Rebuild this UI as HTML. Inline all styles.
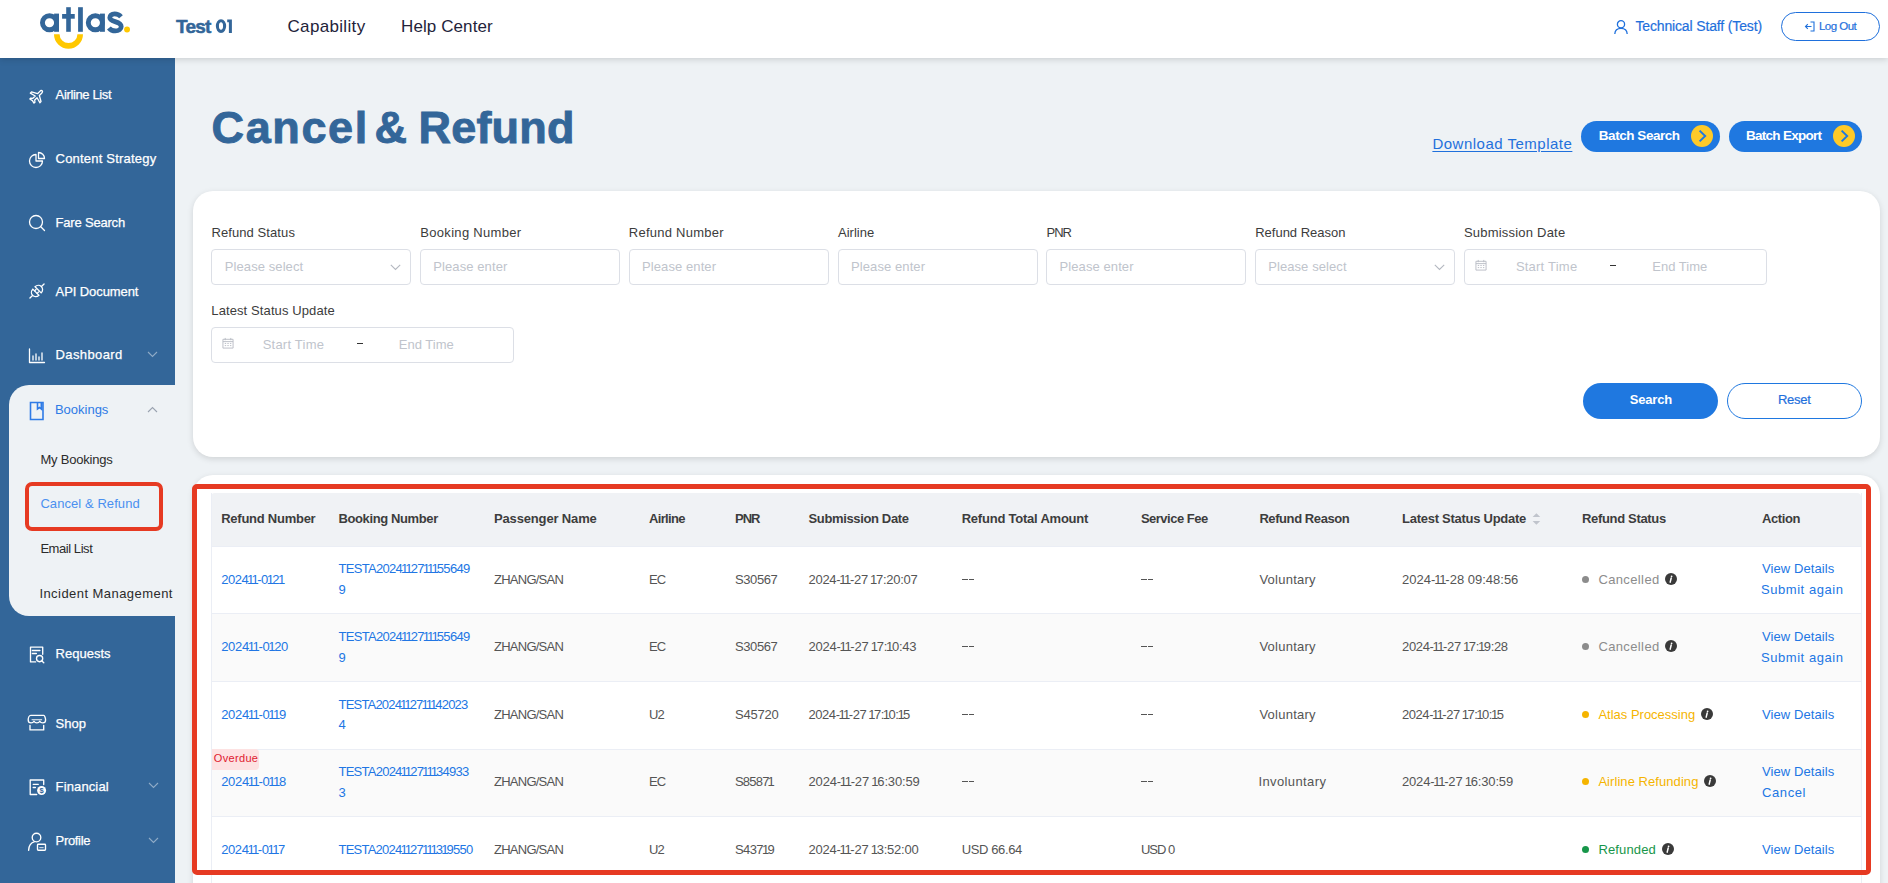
<!DOCTYPE html>
<html><head><meta charset="utf-8"><title>Cancel &amp; Refund</title>
<style>
html,body{margin:0;padding:0}
body{width:1888px;height:883px;overflow:hidden;position:relative;background:#eef2f5;font-family:"Liberation Sans", sans-serif}
.abs{position:absolute}
.t{position:absolute;white-space:nowrap;line-height:1;font-family:"Liberation Sans", sans-serif}
.one{margin:0 -1.1px}
.inp{position:absolute;box-sizing:border-box;border:1px solid #dcdfe6;border-radius:4px;background:#fff}
</style></head><body>
<!-- sidebar -->
<div class="abs" style="left:0;top:0;width:175px;height:883px;background:#336699"></div>
<div class="abs" style="left:9px;top:384.5px;width:166px;height:231.5px;background:#eef2f5;border-radius:20px 0 0 20px"></div>
<div class="abs" style="left:25px;top:482px;width:137.5px;height:49px;box-sizing:border-box;border:4px solid #e63a22;border-radius:7px"></div>

<svg class="abs" style="left:27.5px;top:86.5px" width="18" height="18" viewBox="0 0 24 24"><path transform="rotate(45 12 12)" stroke="#fff" stroke-width="1.75" fill="none" stroke-linejoin="round" d="M12 2.2 C13.1 2.2 13.7 3.3 13.7 4.5 L13.7 9.3 L21 13.4 L21 15.6 L13.7 13.6 L13.7 18 L15.9 19.8 L15.9 21.6 L12 20.6 L8.1 21.6 L8.1 19.8 L10.3 18 L10.3 13.6 L3 15.6 L3 13.4 L10.3 9.3 L10.3 4.5 C10.3 3.3 10.9 2.2 12 2.2 Z"/></svg>
<svg class="abs" style="left:28px;top:151px" width="18" height="18" viewBox="0 0 18 18"><path stroke="#fff" stroke-width="1.3" fill="none" stroke-linecap="round" stroke-linejoin="round" d="M8 3.5 A6.5 6.5 0 1 0 14.5 10 L8 10 Z"/><path stroke="#fff" stroke-width="1.3" fill="none" stroke-linecap="round" stroke-linejoin="round" d="M10.5 1.5 L10.5 7.5 L16.5 7.5 A6 6 0 0 0 10.5 1.5 Z"/></svg>
<svg class="abs" style="left:28px;top:214px" width="18" height="18" viewBox="0 0 18 18"><circle cx="8" cy="8" r="6.5" stroke="#fff" stroke-width="1.3" fill="none" stroke-linecap="round" stroke-linejoin="round"/><path stroke="#fff" stroke-width="1.3" fill="none" stroke-linecap="round" stroke-linejoin="round" d="M12.8 12.8 L16.5 16.5"/></svg>
<svg class="abs" style="left:26px;top:280px" width="22" height="22" viewBox="-11 -11 22 22"><g transform="rotate(-45)" stroke="#fff" stroke-width="1.3" fill="none" stroke-linecap="round"><path d="M-1.6 -4.3 L-1.6 4.3 A4.6 4.3 0 0 1 -1.6 -4.3 Z"/><path d="M1.6 -4.3 L1.6 4.3 A4.6 4.3 0 0 0 1.6 -4.3 Z"/><path d="M-1.6 -1.8 L0.3 -1.8 M-1.6 1.8 L0.3 1.8 M-6.3 0 L-10 0 M6.3 0 L10 0"/></g></svg>
<svg class="abs" style="left:28px;top:348px" width="18" height="16" viewBox="0 0 18 16"><path stroke="#fff" stroke-width="1.3" fill="none" stroke-linecap="round" stroke-linejoin="round" d="M1.5 1 L1.5 14.5 L16.5 14.5 M5 12 L5 8 M8 12 L8 6 M11 12 L11 9 M14 12 L14 5"/></svg>
<svg class="abs" style="left:29px;top:401px" width="16" height="20" viewBox="0 0 16 20"><path stroke="#2f7be6" stroke-width="1.6" fill="none" d="M1.5 1.5 L14 1.5 L14 18.5 L1.5 18.5 Z M8.5 1.5 L8.5 8 L10.5 6.5 L12.3 8 L12.3 1.5"/></svg>
<svg class="abs" style="left:24px;top:640px" width="26" height="28" viewBox="0 0 26 28"><path stroke="#fff" stroke-width="1.35" fill="none" stroke-linecap="round" stroke-linejoin="round" d="M11.6 21.9 L6.5 21.9 L6.5 7.1 L18.7 7.1 L18.7 14.3 M8.4 10.5 L15.9 10.5 M8.4 13.5 L12.4 13.5"/><circle cx="15.6" cy="18.6" r="3.1" stroke="#fff" stroke-width="1.35" fill="none" stroke-linecap="round" stroke-linejoin="round"/><path stroke="#fff" stroke-width="1.35" fill="none" stroke-linecap="round" stroke-linejoin="round" d="M17.9 20.9 L19.8 22.8"/></svg>
<svg class="abs" style="left:24px;top:708px" width="26" height="28" viewBox="0 0 26 28"><path stroke="#fff" stroke-width="1.35" fill="none" stroke-linecap="round" stroke-linejoin="round" d="M6.8 7.3 L19.7 7.3 C20.6 7.3 21.6 10 21.6 12 C21.6 13.8 20.4 14.9 18.8 14.9 C17.3 14.9 16.2 14 15.8 13.2 C15.3 14.2 14.2 14.9 12.9 14.9 C11.6 14.9 10.5 14.2 10 13.2 C9.6 14 8.5 14.9 7 14.9 C5.4 14.9 4.2 13.8 4.2 12 C4.2 10 5.2 7.3 6.8 7.3 Z M6 17.3 L6 21.9 L19.7 21.9 L19.7 17.3"/><path d="M7.6 11.7 L18.1 11.7" stroke="rgba(255,255,255,.75)" stroke-width="1.3"/></svg>
<svg class="abs" style="left:24px;top:774px" width="26" height="28" viewBox="0 0 26 28"><path stroke="#fff" stroke-width="1.35" fill="none" stroke-linecap="round" stroke-linejoin="round" stroke-width="1.5" d="M12.7 20.5 L6.2 20.5 L6.2 6 L19.7 6 L19.7 10.5 M9.2 10.3 L14.3 10.3 M9.2 13.5 L11.4 13.5"/><circle cx="17.6" cy="16.5" r="4.5" fill="#fff"/><text x="17.6" y="19.2" font-size="7.5" font-family="Liberation Sans" font-weight="700" text-anchor="middle" fill="#336699">$</text></svg>
<svg class="abs" style="left:24px;top:828px" width="26" height="28" viewBox="0 0 26 28"><circle cx="12.5" cy="9.5" r="4.3" stroke="#fff" stroke-width="1.35" fill="none" stroke-linecap="round" stroke-linejoin="round"/><path stroke="#fff" stroke-width="1.35" fill="none" stroke-linecap="round" stroke-linejoin="round" d="M10.6 13.7 C7.2 14.6 4.8 18 4.6 22.4"/><rect x="13.5" y="16.2" width="8" height="6" rx="0.8" stroke="#fff" stroke-width="1.35" fill="none" stroke-linecap="round" stroke-linejoin="round"/><path d="M15.3 19.6 L19.6 19.6" stroke="rgba(255,255,255,.7)" stroke-width="1.2"/></svg>
<svg class="abs" style="left:147px;top:351px" width="11" height="7" viewBox="0 0 11 7"><path d="M1 1 L5.5 5.5 L10 1" stroke="rgba(255,255,255,.45)" stroke-width="1.1" fill="none"/></svg>
<svg class="abs" style="left:147px;top:406px" width="11" height="7" viewBox="0 0 11 7"><path d="M1 6 L5.5 1.5 L10 6" stroke="#9aa3b0" stroke-width="1.1" fill="none"/></svg>
<svg class="abs" style="left:148px;top:782px" width="11" height="7" viewBox="0 0 11 7"><path d="M1 1 L5.5 5.5 L10 1" stroke="rgba(255,255,255,.45)" stroke-width="1.1" fill="none"/></svg>
<svg class="abs" style="left:148px;top:837px" width="11" height="7" viewBox="0 0 11 7"><path d="M1 1 L5.5 5.5 L10 1" stroke="rgba(255,255,255,.45)" stroke-width="1.1" fill="none"/></svg>

<!-- header -->
<div class="abs" style="left:0;top:0;width:1888px;height:58px;background:#fff;box-shadow:0 1px 7px rgba(0,0,0,.17)"></div>
<svg class="abs" style="left:0;top:0" width="140" height="58" viewBox="0 0 140 58">
 <g fill="none" stroke="#336699" stroke-width="4.9"><circle cx="49.5" cy="22.75" r="7.05"/><circle cx="95.35" cy="22.75" r="7.05"/></g>
 <g fill="#336699"><rect x="54.1" y="13.6" width="4.9" height="18.2"/><rect x="100" y="13.6" width="4.9" height="18.2"/>
 <rect x="66.2" y="7.2" width="4.6" height="24.6"/><rect x="62.1" y="14" width="12.65" height="4.7"/><rect x="78.1" y="7.2" width="4.75" height="24.6"/></g>
 <path d="M121 16.8 C119.2 14.7 116.8 13.9 114.6 13.9 C111.4 13.9 109.8 15.8 109.8 17.8 C109.8 22.3 121.2 20.9 121.2 26.4 C121.2 29.2 118.8 30.9 115.4 30.9 C112.6 30.9 110.4 29.8 108.9 27.9" fill="none" stroke="#336699" stroke-width="4.8"/>
 <circle cx="127.05" cy="29.55" r="2.95" fill="#ffc800"/>
 <path d="M56.8 34.2 A11.7 11.7 0 0 0 80.2 34.2" fill="none" stroke="#ffc800" stroke-width="5.6"/>
</svg>
<svg class="abs" style="left:1613px;top:19px" width="16" height="16" viewBox="0 0 16 16"><circle cx="8" cy="5.3" r="3.6" stroke="#1f70dc" stroke-width="1.3" fill="none"/><path d="M1.8 15 C2 11.2 4.6 9.3 8 9.3 C11.4 9.3 14 11.2 14.2 15" stroke="#1f70dc" stroke-width="1.3" fill="none"/></svg>
<div class="abs" style="left:1781px;top:12px;width:99px;height:29px;box-sizing:border-box;border:1px solid #1f70dc;border-radius:15px"></div>
<svg class="abs" style="left:1804px;top:21px" width="11" height="11" viewBox="0 0 11 11"><path d="M6.5 1 L10 1 L10 10 L6.5 10 M7.5 5.5 L1.5 5.5 M3.8 3.2 L1.5 5.5 L3.8 7.8" stroke="#1f70dc" stroke-width="1.1" fill="none"/></svg>
<svg class="abs" style="left:210px;top:15px" width="30" height="22" viewBox="210 15 30 22"><ellipse cx="221" cy="26.1" rx="3.6" ry="5.3" stroke="#336699" stroke-width="3.1" fill="none"/><path d="M227.2 19.6 L231.9 19.6 L231.9 32.9 L228.9 32.9 L228.9 22.3 L227.2 22.3 Z" fill="#336699"/></svg>
<!-- batch buttons -->
<div class="abs" style="left:1581px;top:121px;width:139px;height:31px;border-radius:16px;background:#1f78e0"></div>
<div class="abs" style="left:1691px;top:125px;width:22px;height:22px;border-radius:50%;background:#ffca28"></div>
<svg class="abs" style="left:1691px;top:125px" width="22" height="22" viewBox="0 0 22 22"><path d="M8.6 5.6 L14.2 11 L8.6 16.4" stroke="#1f78e0" stroke-width="1.9" fill="none"/></svg>
<div class="abs" style="left:1729px;top:121px;width:132.5px;height:31px;border-radius:16px;background:#1f78e0"></div>
<div class="abs" style="left:1833px;top:125px;width:22px;height:22px;border-radius:50%;background:#ffca28"></div>
<svg class="abs" style="left:1833px;top:125px" width="22" height="22" viewBox="0 0 22 22"><path d="M8.6 5.6 L14.2 11 L8.6 16.4" stroke="#1f78e0" stroke-width="1.9" fill="none"/></svg>
<!-- filter card -->
<div class="abs" style="left:193px;top:191px;width:1687px;height:266px;background:#fff;border-radius:20px;box-shadow:0 2px 6px rgba(0,0,0,.13)"></div>
<div class="inp" style="left:211px;top:249px;width:200px;height:36px"></div>
<div class="inp" style="left:420px;top:249px;width:200px;height:36px"></div>
<div class="inp" style="left:629px;top:249px;width:200px;height:36px"></div>
<div class="inp" style="left:838px;top:249px;width:200px;height:36px"></div>
<div class="inp" style="left:1046px;top:249px;width:200px;height:36px"></div>
<div class="inp" style="left:1255px;top:249px;width:199.5px;height:36px"></div>
<svg class="abs" style="left:390px;top:264px" width="11" height="7" viewBox="0 0 11 7"><path d="M0.8 0.8 L5.5 5.5 L10.2 0.8" stroke="#b4b8c0" stroke-width="1.1" fill="none"/></svg>
<svg class="abs" style="left:1434px;top:264px" width="11" height="7" viewBox="0 0 11 7"><path d="M0.8 0.8 L5.5 5.5 L10.2 0.8" stroke="#b4b8c0" stroke-width="1.1" fill="none"/></svg>
<div class="inp" style="left:1464px;top:249px;width:303px;height:36px"></div>
<div class="inp" style="left:211px;top:327px;width:303px;height:36px"></div>
<svg class="abs" style="left:1474.8px;top:259px" width="12" height="12" viewBox="0 0 13 13"><path d="M1 2.5 L12 2.5 L12 12 L1 12 Z M1 5 L12 5 M3.5 1 L3.5 3.5 M9.5 1 L9.5 3.5" stroke="#b8bcc4" stroke-width="1" fill="none"/><path d="M3 7 h1.5 M5.8 7 h1.5 M8.6 7 h1.5 M3 9.3 h1.5 M5.8 9.3 h1.5 M8.6 9.3 h1.5" stroke="#b8bcc4" stroke-width="1"/></svg>
<svg class="abs" style="left:221.8px;top:337px" width="12" height="12" viewBox="0 0 13 13"><path d="M1 2.5 L12 2.5 L12 12 L1 12 Z M1 5 L12 5 M3.5 1 L3.5 3.5 M9.5 1 L9.5 3.5" stroke="#b8bcc4" stroke-width="1" fill="none"/><path d="M3 7 h1.5 M5.8 7 h1.5 M8.6 7 h1.5 M3 9.3 h1.5 M5.8 9.3 h1.5 M8.6 9.3 h1.5" stroke="#b8bcc4" stroke-width="1"/></svg>
<div class="abs" style="left:1610px;top:265px;width:6px;height:1.3px;background:#333"></div>
<div class="abs" style="left:357px;top:343px;width:6px;height:1.3px;background:#333"></div>
<div class="abs" style="left:1583px;top:383px;width:135px;height:36px;border-radius:18px;background:#1f78e0"></div>
<div class="abs" style="left:1727px;top:383px;width:135px;height:36px;border-radius:18px;box-sizing:border-box;border:1px solid #1f78e0;background:#fff"></div>
<!-- table card -->
<div class="abs" style="left:193px;top:475px;width:1687px;height:430px;background:#fff;border-radius:20px;box-shadow:0 2px 6px rgba(0,0,0,.13)"></div>
<div class="abs" style="left:211px;top:493px;width:1650px;height:54px;background:#f0f2f5;border-radius:4px 4px 0 0"></div>
<div class="abs" style="left:211px;top:546px;width:1650px;height:67.5px;background:#ffffff;border-top:1px solid #ebeef5;box-sizing:border-box"></div>
<div class="abs" style="left:211px;top:613px;width:1650px;height:67.5px;background:#fafafa;border-top:1px solid #ebeef5;box-sizing:border-box"></div>
<div class="abs" style="left:211px;top:681px;width:1650px;height:67.5px;background:#ffffff;border-top:1px solid #ebeef5;box-sizing:border-box"></div>
<div class="abs" style="left:211px;top:748.5px;width:1650px;height:67.5px;background:#fafafa;border-top:1px solid #ebeef5;box-sizing:border-box"></div>
<div class="abs" style="left:211px;top:816px;width:1650px;height:67.5px;background:#ffffff;border-top:1px solid #ebeef5;box-sizing:border-box"></div>
<div class="abs" style="left:211px;top:493px;width:1px;height:400px;background:#ebeef5"></div>
<div class="abs" style="left:1861px;top:493px;width:1px;height:400px;background:#ebeef5"></div>
<svg class="abs" style="left:1531.5px;top:512px" width="9" height="14" viewBox="0 0 9 14"><path d="M0.6 5 L4.4 1.2 L8.2 5 Z M0.6 9 L4.4 12.8 L8.2 9 Z" fill="#c0c4cc"/></svg>
<div class="abs" style="left:211.5px;top:749px;width:47.5px;height:20.5px;background:#fde2e2;border-radius:0 4px 4px 0"></div>
<div class="abs" style="left:1582px;top:576.4px;width:7px;height:7px;border-radius:50%;background:#8c8c8c"></div>
<svg class="abs" style="left:1665px;top:573.0px" width="12" height="12" viewBox="0 0 12 12"><circle cx="6" cy="6" r="6" fill="#3a3a3a"/><circle cx="6.6" cy="3.3" r="0.9" fill="#fff"/><path d="M6.2 5 L5.2 9.2" stroke="#fff" stroke-width="1.5" stroke-linecap="round"/></svg>
<div class="abs" style="left:1582px;top:643.4px;width:7px;height:7px;border-radius:50%;background:#8c8c8c"></div>
<svg class="abs" style="left:1665px;top:640.0px" width="12" height="12" viewBox="0 0 12 12"><circle cx="6" cy="6" r="6" fill="#3a3a3a"/><circle cx="6.6" cy="3.3" r="0.9" fill="#fff"/><path d="M6.2 5 L5.2 9.2" stroke="#fff" stroke-width="1.5" stroke-linecap="round"/></svg>
<div class="abs" style="left:1582px;top:711.4px;width:7px;height:7px;border-radius:50%;background:#f5b400"></div>
<svg class="abs" style="left:1701.3px;top:708.0px" width="12" height="12" viewBox="0 0 12 12"><circle cx="6" cy="6" r="6" fill="#3a3a3a"/><circle cx="6.6" cy="3.3" r="0.9" fill="#fff"/><path d="M6.2 5 L5.2 9.2" stroke="#fff" stroke-width="1.5" stroke-linecap="round"/></svg>
<div class="abs" style="left:1582px;top:778.4px;width:7px;height:7px;border-radius:50%;background:#f5b400"></div>
<svg class="abs" style="left:1703.9px;top:775.0px" width="12" height="12" viewBox="0 0 12 12"><circle cx="6" cy="6" r="6" fill="#3a3a3a"/><circle cx="6.6" cy="3.3" r="0.9" fill="#fff"/><path d="M6.2 5 L5.2 9.2" stroke="#fff" stroke-width="1.5" stroke-linecap="round"/></svg>
<div class="abs" style="left:1582px;top:846.4px;width:7px;height:7px;border-radius:50%;background:#17964a"></div>
<svg class="abs" style="left:1662.2px;top:843.0px" width="12" height="12" viewBox="0 0 12 12"><circle cx="6" cy="6" r="6" fill="#3a3a3a"/><circle cx="6.6" cy="3.3" r="0.9" fill="#fff"/><path d="M6.2 5 L5.2 9.2" stroke="#fff" stroke-width="1.5" stroke-linecap="round"/></svg>
<div class="abs" style="left:962px;top:579.1px;width:5.6px;height:1.2px;background:#555"></div><div class="abs" style="left:968.6px;top:579.1px;width:5.6px;height:1.2px;background:#555"></div><div class="abs" style="left:1141px;top:579.1px;width:5.6px;height:1.2px;background:#555"></div><div class="abs" style="left:1147.6px;top:579.1px;width:5.6px;height:1.2px;background:#555"></div><div class="abs" style="left:962px;top:646.1px;width:5.6px;height:1.2px;background:#555"></div><div class="abs" style="left:968.6px;top:646.1px;width:5.6px;height:1.2px;background:#555"></div><div class="abs" style="left:1141px;top:646.1px;width:5.6px;height:1.2px;background:#555"></div><div class="abs" style="left:1147.6px;top:646.1px;width:5.6px;height:1.2px;background:#555"></div><div class="abs" style="left:962px;top:714.1px;width:5.6px;height:1.2px;background:#555"></div><div class="abs" style="left:968.6px;top:714.1px;width:5.6px;height:1.2px;background:#555"></div><div class="abs" style="left:1141px;top:714.1px;width:5.6px;height:1.2px;background:#555"></div><div class="abs" style="left:1147.6px;top:714.1px;width:5.6px;height:1.2px;background:#555"></div><div class="abs" style="left:962px;top:781.1px;width:5.6px;height:1.2px;background:#555"></div><div class="abs" style="left:968.6px;top:781.1px;width:5.6px;height:1.2px;background:#555"></div><div class="abs" style="left:1141px;top:781.1px;width:5.6px;height:1.2px;background:#555"></div><div class="abs" style="left:1147.6px;top:781.1px;width:5.6px;height:1.2px;background:#555"></div>
<div class="abs" style="left:192px;top:484px;width:1679px;height:391px;box-sizing:border-box;border:5px solid #e63a22;border-radius:5px"></div>
<span id="h_test1" class="t" style="left:176.00px;top:17.22px;font-size:19px;font-weight:700;color:#336699;letter-spacing:-0.801px;-webkit-text-stroke:0.5px #336699;">Test</span>
<span id="h_cap" class="t" style="left:287.50px;top:18.01px;font-size:17px;font-weight:400;color:#23233a;letter-spacing:0.333px;">Capability</span>
<span id="h_help" class="t" style="left:401.00px;top:18.01px;font-size:17px;font-weight:400;color:#23233a;letter-spacing:0.100px;">Help Center</span>
<span id="h_user" class="t" style="left:1635.40px;top:19.45px;font-size:14px;font-weight:400;color:#1f70dc;letter-spacing:-0.143px;-webkit-text-stroke:0.2px #1f70dc;">Technical Staff (Test)</span>
<span id="h_logout" class="t" style="left:1818.90px;top:20.77px;font-size:11.5px;font-weight:400;color:#1f70dc;letter-spacing:-0.501px;-webkit-text-stroke:0.2px #1f70dc;">Log Out</span>
<span id="title1" class="t" style="left:211.60px;top:104.91px;font-size:45px;font-weight:700;color:#336699;letter-spacing:1.620px;-webkit-text-stroke:0.9px #336699;">Cancel</span>
<span id="title2" class="t" style="left:374.40px;top:104.91px;font-size:45px;font-weight:700;color:#336699;letter-spacing:0.000px;-webkit-text-stroke:0.9px #336699;">&amp;</span>
<span id="title3" class="t" style="left:418.40px;top:104.91px;font-size:45px;font-weight:700;color:#336699;letter-spacing:0.240px;-webkit-text-stroke:0.9px #336699;">Refund</span>
<span id="dl" class="t" style="left:1432.40px;top:136.30px;font-size:15px;font-weight:400;color:#1f70dc;letter-spacing:0.500px;text-decoration:underline;text-underline-offset:2px;">Download Template</span>
<span id="bs" class="t" style="left:1598.80px;top:129.07px;font-size:13.5px;font-weight:700;color:#ffffff;letter-spacing:-0.454px;">Batch Search</span>
<span id="be" class="t" style="left:1746.00px;top:129.07px;font-size:13.5px;font-weight:700;color:#ffffff;letter-spacing:-0.727px;">Batch Export</span>
<span id="s0" class="t" style="left:55.60px;top:87.90px;font-size:13px;font-weight:400;color:#ffffff;letter-spacing:-0.364px;-webkit-text-stroke:0.25px #ffffff;">Airline List</span>
<span id="s1" class="t" style="left:55.60px;top:152.40px;font-size:13px;font-weight:400;color:#ffffff;letter-spacing:0.200px;-webkit-text-stroke:0.25px #ffffff;">Content Strategy</span>
<span id="s2" class="t" style="left:55.60px;top:215.90px;font-size:13px;font-weight:400;color:#ffffff;letter-spacing:-0.200px;-webkit-text-stroke:0.25px #ffffff;">Fare Search</span>
<span id="s3" class="t" style="left:55.60px;top:285.30px;font-size:13px;font-weight:400;color:#ffffff;letter-spacing:-0.091px;-webkit-text-stroke:0.25px #ffffff;">API Document</span>
<span id="s4" class="t" style="left:55.60px;top:348.20px;font-size:13px;font-weight:400;color:#ffffff;letter-spacing:0.376px;-webkit-text-stroke:0.25px #ffffff;">Dashboard</span>
<span id="s5" class="t" style="left:55.60px;top:647.30px;font-size:13px;font-weight:400;color:#ffffff;letter-spacing:0.000px;-webkit-text-stroke:0.25px #ffffff;">Requests</span>
<span id="s6" class="t" style="left:55.60px;top:716.70px;font-size:13px;font-weight:400;color:#ffffff;letter-spacing:-0.000px;-webkit-text-stroke:0.25px #ffffff;">Shop</span>
<span id="s7" class="t" style="left:55.60px;top:780.40px;font-size:13px;font-weight:400;color:#ffffff;letter-spacing:0.125px;-webkit-text-stroke:0.25px #ffffff;">Financial</span>
<span id="s8" class="t" style="left:55.60px;top:834.30px;font-size:13px;font-weight:400;color:#ffffff;letter-spacing:-0.332px;-webkit-text-stroke:0.25px #ffffff;">Profile</span>
<span id="s_book" class="t" style="left:54.90px;top:403.00px;font-size:13px;font-weight:400;color:#2f7be6;letter-spacing:0.000px;">Bookings</span>
<span id="s_my" class="t" style="left:40.40px;top:452.70px;font-size:13px;font-weight:400;color:#2b2b2b;letter-spacing:-0.200px;">My Bookings</span>
<span id="s_cr" class="t" style="left:40.40px;top:497.40px;font-size:13px;font-weight:400;color:#4a90f0;letter-spacing:0.072px;">Cancel &amp; Refund</span>
<span id="s_em" class="t" style="left:40.40px;top:542.20px;font-size:13px;font-weight:400;color:#2b2b2b;letter-spacing:-0.444px;">Email List</span>
<span id="s_inc" class="t" style="left:39.40px;top:587.30px;font-size:13px;font-weight:400;color:#2b2b2b;letter-spacing:0.445px;">Incident Management</span>
<span id="lab0" class="t" style="left:211.50px;top:225.90px;font-size:13px;font-weight:400;color:#3c3c3c;letter-spacing:0.083px;">Refund Status</span>
<span id="lab1" class="t" style="left:420.30px;top:225.90px;font-size:13px;font-weight:400;color:#3c3c3c;letter-spacing:0.308px;">Booking Number</span>
<span id="lab2" class="t" style="left:628.80px;top:225.90px;font-size:13px;font-weight:400;color:#3c3c3c;letter-spacing:0.250px;">Refund Number</span>
<span id="lab3" class="t" style="left:838.00px;top:225.90px;font-size:13px;font-weight:400;color:#3c3c3c;letter-spacing:0.000px;">Airline</span>
<span id="lab4" class="t" style="left:1046.50px;top:225.90px;font-size:13px;font-weight:400;color:#3c3c3c;letter-spacing:-1.000px;">PNR</span>
<span id="lab5" class="t" style="left:1255.20px;top:225.90px;font-size:13px;font-weight:400;color:#3c3c3c;letter-spacing:-0.001px;">Refund Reason</span>
<span id="lab6" class="t" style="left:1463.90px;top:225.90px;font-size:13px;font-weight:400;color:#3c3c3c;letter-spacing:0.212px;">Submission Date</span>
<span id="lab7" class="t" style="left:211.30px;top:303.90px;font-size:13px;font-weight:400;color:#3c3c3c;letter-spacing:0.105px;">Latest Status Update</span>
<span id="ph0" class="t" style="left:224.80px;top:260.00px;font-size:13px;font-weight:400;color:#c0c4cc;letter-spacing:0.083px;">Please select</span>
<span id="ph1" class="t" style="left:433.30px;top:260.00px;font-size:13px;font-weight:400;color:#c0c4cc;letter-spacing:0.091px;">Please enter</span>
<span id="ph2" class="t" style="left:642.00px;top:260.00px;font-size:13px;font-weight:400;color:#c0c4cc;letter-spacing:0.091px;">Please enter</span>
<span id="ph3" class="t" style="left:851.00px;top:260.00px;font-size:13px;font-weight:400;color:#c0c4cc;letter-spacing:0.091px;">Please enter</span>
<span id="ph4" class="t" style="left:1059.50px;top:260.00px;font-size:13px;font-weight:400;color:#c0c4cc;letter-spacing:0.091px;">Please enter</span>
<span id="ph5" class="t" style="left:1268.20px;top:260.00px;font-size:13px;font-weight:400;color:#c0c4cc;letter-spacing:0.083px;">Please select</span>
<span id="ph_st1" class="t" style="left:1515.90px;top:260.00px;font-size:13px;font-weight:400;color:#c0c4cc;letter-spacing:0.222px;">Start Time</span>
<span id="ph_et1" class="t" style="left:1652.30px;top:260.00px;font-size:13px;font-weight:400;color:#c0c4cc;letter-spacing:0.001px;">End Time</span>
<span id="ph_st2" class="t" style="left:262.70px;top:337.60px;font-size:13px;font-weight:400;color:#c0c4cc;letter-spacing:0.222px;">Start Time</span>
<span id="ph_et2" class="t" style="left:398.80px;top:337.60px;font-size:13px;font-weight:400;color:#c0c4cc;letter-spacing:-0.001px;">End Time</span>
<span id="btn_s" class="t" style="left:1629.80px;top:393.20px;font-size:13px;font-weight:700;color:#ffffff;letter-spacing:-0.200px;">Search</span>
<span id="btn_r" class="t" style="left:1777.90px;top:393.20px;font-size:13px;font-weight:400;color:#1f70dc;letter-spacing:-0.250px;-webkit-text-stroke:0.2px #1f70dc;">Reset</span>
<span id="th0" class="t" style="left:221.20px;top:511.60px;font-size:13px;font-weight:700;color:#3d3d3d;letter-spacing:-0.251px;">Refund Number</span>
<span id="th1" class="t" style="left:338.50px;top:511.60px;font-size:13px;font-weight:700;color:#3d3d3d;letter-spacing:-0.385px;">Booking Number</span>
<span id="th2" class="t" style="left:494.00px;top:511.60px;font-size:13px;font-weight:700;color:#3d3d3d;letter-spacing:-0.154px;">Passenger Name</span>
<span id="th3" class="t" style="left:649.00px;top:511.60px;font-size:13px;font-weight:700;color:#3d3d3d;letter-spacing:-0.665px;">Airline</span>
<span id="th4" class="t" style="left:735.00px;top:511.60px;font-size:13px;font-weight:700;color:#3d3d3d;letter-spacing:-1.000px;">PNR</span>
<span id="th5" class="t" style="left:808.50px;top:511.60px;font-size:13px;font-weight:700;color:#3d3d3d;letter-spacing:-0.357px;">Submission Date</span>
<span id="th6" class="t" style="left:961.70px;top:511.60px;font-size:13px;font-weight:700;color:#3d3d3d;letter-spacing:-0.222px;">Refund Total Amount</span>
<span id="th7" class="t" style="left:1140.90px;top:511.60px;font-size:13px;font-weight:700;color:#3d3d3d;letter-spacing:-0.500px;">Service Fee</span>
<span id="th8" class="t" style="left:1259.40px;top:511.60px;font-size:13px;font-weight:700;color:#3d3d3d;letter-spacing:-0.417px;">Refund Reason</span>
<span id="th9" class="t" style="left:1402.00px;top:511.60px;font-size:13px;font-weight:700;color:#3d3d3d;letter-spacing:-0.263px;">Latest Status Update</span>
<span id="th10" class="t" style="left:1582.00px;top:511.60px;font-size:13px;font-weight:700;color:#3d3d3d;letter-spacing:-0.333px;">Refund Status</span>
<span id="th11" class="t" style="left:1762.00px;top:511.60px;font-size:13px;font-weight:700;color:#3d3d3d;letter-spacing:-0.400px;">Action</span>
<span id="r0rn" class="t" style="left:221.20px;top:572.80px;font-size:13px;font-weight:400;color:#2176e4;letter-spacing:-0.500px;">2024<span class="one">1</span><span class="one">1</span>-0<span class="one">1</span>2<span class="one">1</span></span>
<span id="r0bn1" class="t" style="left:338.50px;top:561.80px;font-size:13px;font-weight:400;color:#2176e4;letter-spacing:-0.700px;">TESTA2024<span class="one">1</span><span class="one">1</span>27<span class="one">1</span><span class="one">1</span><span class="one">1</span>55649</span>
<span id="r0bn2" class="t" style="left:338.50px;top:582.80px;font-size:13px;font-weight:400;color:#2176e4;letter-spacing:0.000px;">9</span>
<span id="r0pn" class="t" style="left:494.00px;top:572.80px;font-size:13px;font-weight:400;color:#555555;letter-spacing:-0.750px;">ZHANG/SAN</span>
<span id="r0air" class="t" style="left:649.00px;top:572.80px;font-size:13px;font-weight:400;color:#555555;letter-spacing:-1.000px;">EC</span>
<span id="r0pnr" class="t" style="left:735.00px;top:572.80px;font-size:13px;font-weight:400;color:#555555;letter-spacing:-0.400px;">S30567</span>
<span id="r0sub" class="t" style="left:808.50px;top:572.80px;font-size:13px;font-weight:400;color:#555555;letter-spacing:-0.278px;">2024-<span class="one">1</span><span class="one">1</span>-27 <span class="one">1</span>7:20:07</span>
<span id="r0rea" class="t" style="left:1259.40px;top:572.80px;font-size:13px;font-weight:400;color:#555555;letter-spacing:0.250px;">Voluntary</span>
<span id="r0upd" class="t" style="left:1402.00px;top:572.80px;font-size:13px;font-weight:400;color:#555555;letter-spacing:0.000px;">2024-<span class="one">1</span><span class="one">1</span>-28 09:48:56</span>
<span id="r0st" class="t" style="left:1598.40px;top:572.80px;font-size:13px;font-weight:400;color:#8c8c8c;letter-spacing:0.376px;">Cancelled</span>
<span id="r0a1" class="t" style="left:1762.00px;top:561.80px;font-size:13px;font-weight:400;color:#2176e4;letter-spacing:0.091px;">View Details</span>
<span id="r0a2" class="t" style="left:1761.00px;top:582.80px;font-size:13px;font-weight:400;color:#2176e4;letter-spacing:0.545px;">Submit again</span>
<span id="r1rn" class="t" style="left:221.20px;top:639.80px;font-size:13px;font-weight:400;color:#2176e4;letter-spacing:-0.300px;">2024<span class="one">1</span><span class="one">1</span>-0<span class="one">1</span>20</span>
<span id="r1bn1" class="t" style="left:338.50px;top:629.80px;font-size:13px;font-weight:400;color:#2176e4;letter-spacing:-0.700px;">TESTA2024<span class="one">1</span><span class="one">1</span>27<span class="one">1</span><span class="one">1</span><span class="one">1</span>55649</span>
<span id="r1bn2" class="t" style="left:338.50px;top:650.80px;font-size:13px;font-weight:400;color:#2176e4;letter-spacing:0.000px;">9</span>
<span id="r1pn" class="t" style="left:494.00px;top:639.80px;font-size:13px;font-weight:400;color:#555555;letter-spacing:-0.750px;">ZHANG/SAN</span>
<span id="r1air" class="t" style="left:649.00px;top:639.80px;font-size:13px;font-weight:400;color:#555555;letter-spacing:-1.000px;">EC</span>
<span id="r1pnr" class="t" style="left:735.00px;top:639.80px;font-size:13px;font-weight:400;color:#555555;letter-spacing:-0.400px;">S30567</span>
<span id="r1sub" class="t" style="left:808.50px;top:639.80px;font-size:13px;font-weight:400;color:#555555;letter-spacing:-0.223px;">2024-<span class="one">1</span><span class="one">1</span>-27 <span class="one">1</span>7:<span class="one">1</span>0:43</span>
<span id="r1rea" class="t" style="left:1259.40px;top:639.80px;font-size:13px;font-weight:400;color:#555555;letter-spacing:0.250px;">Voluntary</span>
<span id="r1upd" class="t" style="left:1402.00px;top:639.80px;font-size:13px;font-weight:400;color:#555555;letter-spacing:-0.333px;">2024-<span class="one">1</span><span class="one">1</span>-27 <span class="one">1</span>7:<span class="one">1</span>9:28</span>
<span id="r1st" class="t" style="left:1598.40px;top:639.80px;font-size:13px;font-weight:400;color:#8c8c8c;letter-spacing:0.376px;">Cancelled</span>
<span id="r1a1" class="t" style="left:1762.00px;top:629.80px;font-size:13px;font-weight:400;color:#2176e4;letter-spacing:0.091px;">View Details</span>
<span id="r1a2" class="t" style="left:1761.00px;top:650.80px;font-size:13px;font-weight:400;color:#2176e4;letter-spacing:0.545px;">Submit again</span>
<span id="r2rn" class="t" style="left:221.20px;top:707.80px;font-size:13px;font-weight:400;color:#2176e4;letter-spacing:-0.300px;">2024<span class="one">1</span><span class="one">1</span>-0<span class="one">1</span><span class="one">1</span>9</span>
<span id="r2bn1" class="t" style="left:338.50px;top:697.80px;font-size:13px;font-weight:400;color:#2176e4;letter-spacing:-0.800px;">TESTA2024<span class="one">1</span><span class="one">1</span>27<span class="one">1</span><span class="one">1</span><span class="one">1</span>42023</span>
<span id="r2bn2" class="t" style="left:338.50px;top:717.80px;font-size:13px;font-weight:400;color:#2176e4;letter-spacing:0.000px;">4</span>
<span id="r2pn" class="t" style="left:494.00px;top:707.80px;font-size:13px;font-weight:400;color:#555555;letter-spacing:-0.750px;">ZHANG/SAN</span>
<span id="r2air" class="t" style="left:649.00px;top:707.80px;font-size:13px;font-weight:400;color:#555555;letter-spacing:-1.000px;">U2</span>
<span id="r2pnr" class="t" style="left:735.00px;top:707.80px;font-size:13px;font-weight:400;color:#555555;letter-spacing:-0.200px;">S45720</span>
<span id="r2sub" class="t" style="left:808.50px;top:707.80px;font-size:13px;font-weight:400;color:#555555;letter-spacing:-0.445px;">2024-<span class="one">1</span><span class="one">1</span>-27 <span class="one">1</span>7:<span class="one">1</span>0:<span class="one">1</span>5</span>
<span id="r2rea" class="t" style="left:1259.40px;top:707.80px;font-size:13px;font-weight:400;color:#555555;letter-spacing:0.250px;">Voluntary</span>
<span id="r2upd" class="t" style="left:1402.00px;top:707.80px;font-size:13px;font-weight:400;color:#555555;letter-spacing:-0.444px;">2024-<span class="one">1</span><span class="one">1</span>-27 <span class="one">1</span>7:<span class="one">1</span>0:<span class="one">1</span>5</span>
<span id="r2st" class="t" style="left:1598.40px;top:707.80px;font-size:13px;font-weight:400;color:#f5b400;letter-spacing:-0.001px;">Atlas Processing</span>
<span id="r2a1" class="t" style="left:1762.00px;top:707.80px;font-size:13px;font-weight:400;color:#2176e4;letter-spacing:0.091px;">View Details</span>
<span id="r3rn" class="t" style="left:221.20px;top:774.80px;font-size:13px;font-weight:400;color:#2176e4;letter-spacing:-0.300px;">2024<span class="one">1</span><span class="one">1</span>-0<span class="one">1</span><span class="one">1</span>8</span>
<span id="r3bn1" class="t" style="left:338.50px;top:764.80px;font-size:13px;font-weight:400;color:#2176e4;letter-spacing:-0.750px;">TESTA2024<span class="one">1</span><span class="one">1</span>27<span class="one">1</span><span class="one">1</span><span class="one">1</span>34933</span>
<span id="r3bn2" class="t" style="left:338.50px;top:785.80px;font-size:13px;font-weight:400;color:#2176e4;letter-spacing:0.000px;">3</span>
<span id="r3pn" class="t" style="left:494.00px;top:774.80px;font-size:13px;font-weight:400;color:#555555;letter-spacing:-0.750px;">ZHANG/SAN</span>
<span id="r3air" class="t" style="left:649.00px;top:774.80px;font-size:13px;font-weight:400;color:#555555;letter-spacing:-1.000px;">EC</span>
<span id="r3pnr" class="t" style="left:735.00px;top:774.80px;font-size:13px;font-weight:400;color:#555555;letter-spacing:-0.800px;">S8587<span class="one">1</span></span>
<span id="r3sub" class="t" style="left:808.50px;top:774.80px;font-size:13px;font-weight:400;color:#555555;letter-spacing:-0.167px;">2024-<span class="one">1</span><span class="one">1</span>-27 <span class="one">1</span>6:30:59</span>
<span id="r3rea" class="t" style="left:1258.40px;top:774.80px;font-size:13px;font-weight:400;color:#555555;letter-spacing:0.400px;">Involuntary</span>
<span id="r3upd" class="t" style="left:1402.00px;top:774.80px;font-size:13px;font-weight:400;color:#555555;letter-spacing:-0.168px;">2024-<span class="one">1</span><span class="one">1</span>-27 <span class="one">1</span>6:30:59</span>
<span id="r3st" class="t" style="left:1598.40px;top:774.80px;font-size:13px;font-weight:400;color:#f5b400;letter-spacing:0.062px;">Airline Refunding</span>
<span id="r3a1" class="t" style="left:1762.00px;top:764.80px;font-size:13px;font-weight:400;color:#2176e4;letter-spacing:0.091px;">View Details</span>
<span id="r3a2" class="t" style="left:1762.00px;top:785.80px;font-size:13px;font-weight:400;color:#2176e4;letter-spacing:0.600px;">Cancel</span>
<span id="r4rn" class="t" style="left:221.20px;top:842.80px;font-size:13px;font-weight:400;color:#2176e4;letter-spacing:-0.400px;">2024<span class="one">1</span><span class="one">1</span>-0<span class="one">1</span><span class="one">1</span>7</span>
<span id="r4bn1" class="t" style="left:338.50px;top:842.80px;font-size:13px;font-weight:400;color:#2176e4;letter-spacing:-0.762px;">TESTA2024<span class="one">1</span><span class="one">1</span>27<span class="one">1</span><span class="one">1</span><span class="one">1</span>3<span class="one">1</span>9550</span>
<span id="r4pn" class="t" style="left:494.00px;top:842.80px;font-size:13px;font-weight:400;color:#555555;letter-spacing:-0.750px;">ZHANG/SAN</span>
<span id="r4air" class="t" style="left:649.00px;top:842.80px;font-size:13px;font-weight:400;color:#555555;letter-spacing:-1.000px;">U2</span>
<span id="r4pnr" class="t" style="left:735.00px;top:842.80px;font-size:13px;font-weight:400;color:#555555;letter-spacing:-0.600px;">S437<span class="one">1</span>9</span>
<span id="r4sub" class="t" style="left:808.50px;top:842.80px;font-size:13px;font-weight:400;color:#555555;letter-spacing:-0.222px;">2024-<span class="one">1</span><span class="one">1</span>-27 <span class="one">1</span>3:52:00</span>
<span id="r4amt" class="t" style="left:961.70px;top:842.80px;font-size:13px;font-weight:400;color:#555555;letter-spacing:-0.375px;">USD 66.64</span>
<span id="r4fee" class="t" style="left:1140.90px;top:842.80px;font-size:13px;font-weight:400;color:#555555;letter-spacing:-1.000px;">USD 0</span>
<span id="r4st" class="t" style="left:1598.40px;top:842.80px;font-size:13px;font-weight:400;color:#17964a;letter-spacing:0.143px;">Refunded</span>
<span id="r4a1" class="t" style="left:1762.00px;top:842.80px;font-size:13px;font-weight:400;color:#2176e4;letter-spacing:0.091px;">View Details</span>
<span id="overdue" class="t" style="left:213.80px;top:752.99px;font-size:11px;font-weight:400;color:#e0202f;letter-spacing:0.334px;">Overdue</span>
</body></html>
